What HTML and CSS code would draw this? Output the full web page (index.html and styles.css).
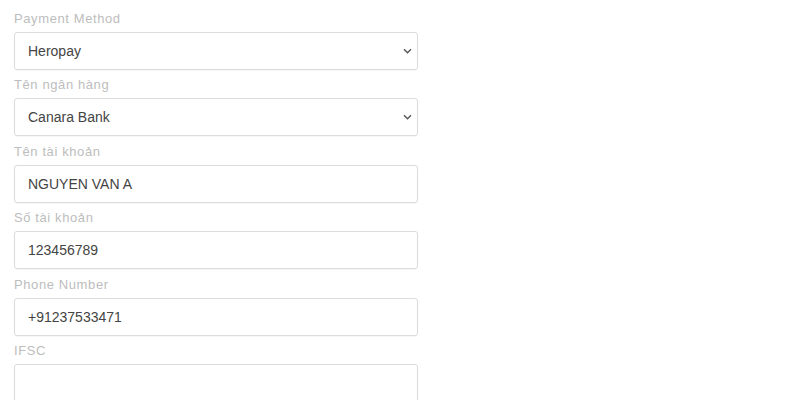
FILE: index.html
```html
<!DOCTYPE html>
<html>
<head>
<meta charset="utf-8">
<link rel="stylesheet" href="styles.css">
</head>
<body>
<form class="form">
  <div class="field">
    <label class="label">Payment Method</label>
    <div class="select">
      <span class="value">Heropay</span>
      <svg class="chev" width="9" height="6" viewBox="0 0 9 6"><path d="M1 1.2l3.5 3.5 3.5-3.5" fill="none" stroke="#555" stroke-width="1.4"/></svg>
    </div>
  </div>
  <div class="field">
    <label class="label">Tên ngân hàng</label>
    <div class="select">
      <span class="value">Canara Bank</span>
      <svg class="chev" width="9" height="6" viewBox="0 0 9 6"><path d="M1 1.2l3.5 3.5 3.5-3.5" fill="none" stroke="#555" stroke-width="1.4"/></svg>
    </div>
  </div>
  <div class="field">
    <label class="label">Tên tài khoản</label>
    <div class="input"><span class="value">NGUYEN VAN A</span></div>
  </div>
  <div class="field">
    <label class="label">Số tài khoản</label>
    <div class="input"><span class="value">123456789</span></div>
  </div>
  <div class="field">
    <label class="label">Phone Number</label>
    <div class="input"><span class="value">+91237533471</span></div>
  </div>
  <div class="field">
    <label class="label">IFSC</label>
    <div class="input"><span class="value"></span></div>
  </div>
</form>
</body>
</html>
```
FILE: styles.css
```css
html, body {
  margin: 0;
  padding: 0;
  background: #fff;
  overflow: hidden;
}
body {
  font-family: "Liberation Sans", Arial, sans-serif;
}
.form {
  padding: 11px 0 0 14px;
  width: 404px;
  display: flex;
  flex-direction: column;
  gap: 7.4px;
}
.field {
  display: flex;
  flex-direction: column;
  gap: 6px;
}
.label {
  font-size: 13px;
  line-height: 15px;
  color: #bdbdbd;
  letter-spacing: 0.6px;
}
.select, .input {
  box-sizing: border-box;
  height: 38px;
  border: 1px solid #dcdcdc;
  border-radius: 3px;
  display: flex;
  align-items: center;
  justify-content: space-between;
  padding: 0 5px 0 13px;
  box-shadow: 0 1px 1px rgba(0,0,0,0.04);
}
.value {
  font-size: 14px;
  color: #444;
}
.chev {
  display: block;
}
```
